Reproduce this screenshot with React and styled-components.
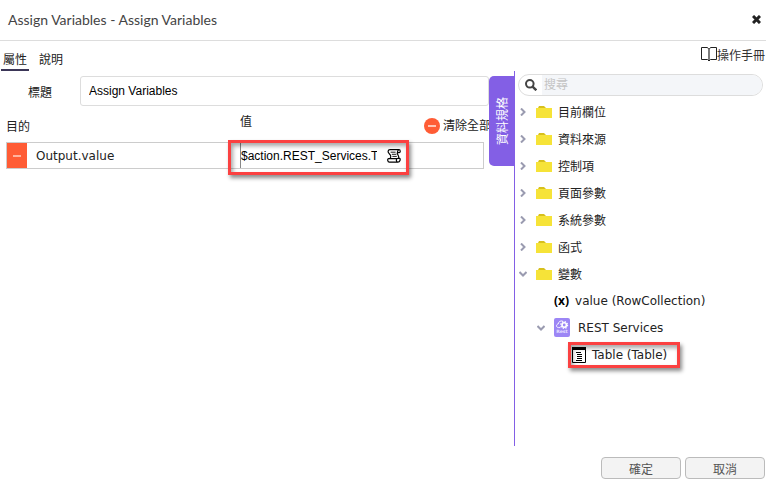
import React from 'react';
import styled, { createGlobalStyle } from 'styled-components';

const folders = ['目前欄位', '資料來源', '控制項', '頁面參數', '系統參數', '函式'];

const ChevronIcon = ({ open }) => (
  <svg width="8" height="8" viewBox="0 0 8 8" fill="none" stroke="#9a9bb0" strokeWidth="2">
    <path d={open ? 'M0.5 2 L4 5.5 L7.5 2' : 'M2 0.5 L5.5 4 L2 7.5'} />
  </svg>
);

const FolderIcon = () => (
  <svg width="16" height="12" viewBox="0 0 16 12">
    <path d="M0 2 H16 V12 H0 Z" fill="#f6e338" />
    <path d="M2 2 L3 0 H8 L10 2 Z" fill="#d7c01c" />
  </svg>
);

const BookIcon = () => (
  <svg width="16" height="15" viewBox="0 0 16 15" fill="none" stroke="#222">
    <path d="M8 2.5 L6.5 0.5 H0.5 V12.5 H6.5 L8 14 L9.5 12.5 H15.5 V0.5 H9.5 Z" />
    <path d="M8 2.5 V13.5" strokeWidth="1.2" />
  </svg>
);

const ScrollIcon = () => (
  <svg width="14" height="14" viewBox="0 0 14 14" fill="none" stroke="#000" strokeWidth="1.2">
    <path d="M3 0.7 H12 C13.6 0.7 13.6 3.6 12.2 3.6 H11 C10.3 3.6 10.3 1.7 11.6 1.2 M3 0.7 C0.6 0.7 0.8 3.4 2 4.4 L3.4 6.2 C4.3 7.6 3.4 8.8 3 9.6 M10.3 3.6 C9.8 5.2 12.2 6.6 11.8 9.4 M1.6 9.7 H10 C9 10.4 9.2 13.2 10.8 13.2 H2.4 C0.4 13.2 0.2 9.7 1.6 9.7 M10.8 13.2 C13.2 13.2 13.6 9.9 12.6 9.4 H10.5" />
    <path d="M3.6 3.2 H8.6 M4.8 5.3 H9.4 M5.4 7.4 H9.8" strokeWidth="0.9" />
  </svg>
);

const SearchIcon = () => (
  <svg width="12" height="12" viewBox="0 0 12 12" fill="none" stroke="#444" strokeWidth="2">
    <circle cx="4.8" cy="4.8" r="3.8" />
    <path d="M7.6 7.6 L11.3 11.3" strokeWidth="2.4" />
  </svg>
);

const CloseIcon = () => (
  <svg width="9" height="9" viewBox="0 0 9 9" stroke="#222" strokeWidth="3">
    <path d="M1 1 L8 8 M8 1 L1 8" />
  </svg>
);

const MinusCircleIcon = () => (
  <svg width="16" height="16" viewBox="0 0 16 16">
    <circle cx="8" cy="8" r="8" fill="#ff5c35" />
    <path d="M4 8 H12" stroke="#ffc5b5" strokeWidth="2" />
  </svg>
);

const MinusIcon = () => (
  <svg width="8" height="2" viewBox="0 0 8 2">
    <path d="M0 1 H8" stroke="#ffb39f" strokeWidth="2" />
  </svg>
);

const RestIcon = () => (
  <svg width="16" height="19" viewBox="0 0 16 19">
    <rect width="16" height="19" rx="2" fill="#9c86f5" />
    <path d="M6.4 9.6 H4.6 C2 9.6 1.8 6.4 4.2 6 C4.4 3.4 7 2.4 8.8 3.2" fill="none" stroke="#fff" strokeWidth="0.9" />
    <circle cx="10.2" cy="7" r="2.2" fill="none" stroke="#fff" strokeWidth="1.6" />
    <circle cx="10.2" cy="7" r="3.4" fill="none" stroke="#fff" strokeWidth="1.2" strokeDasharray="1.4 1.27" />
    <text x="8" y="15.4" textAnchor="middle" fontSize="4.6" fontWeight="bold" fill="#e6e0ff">Rest</text>
  </svg>
);

const TableIcon = () => (
  <svg width="14" height="16" viewBox="0 0 14 16">
    <path d="M0.5 0.5 H13.5 V15.5 H0.5 Z" fill="#fff" stroke="#000" />
    <path d="M0 0 H14 V3 H0 Z" fill="#000" />
    <path d="M4 5.5 H9 M5 7.5 H10 M5 9.5 H10 M5 11.5 H10 M4 13.5 H10" stroke="#000" />
  </svg>
);

const App = () => (
  <Dialog>
    <GlobalStyle />
    <Header>
      <Heading>Assign Variables - Assign Variables</Heading>
      <IconButton type="button" aria-label="Close">
        <CloseIcon />
      </IconButton>
    </Header>
    <TopBar>
      <Tabs role="tablist">
        <Tab type="button" role="tab" aria-selected="true" $active>
          屬性
        </Tab>
        <Tab type="button" role="tab" aria-selected="false">
          說明
        </Tab>
      </Tabs>
      <ManualLink href="#manual">
        <BookIcon />
        操作手冊
      </ManualLink>
    </TopBar>
    <Main>
      <Properties>
        <Field>
          <FieldLabel htmlFor="title">標題</FieldLabel>
          <TitleInput id="title" defaultValue="Assign Variables" />
        </Field>
        <Variables>
          <thead>
            <tr>
              <TargetHead>目的</TargetHead>
              <ValueHead>值</ValueHead>
              <ClearHead>
                <ClearButton type="button">
                  <MinusCircleIcon />
                  清除全部
                </ClearButton>
              </ClearHead>
            </tr>
          </thead>
          <tbody>
            <tr>
              <Cell>
                <Target>
                  <RemoveButton type="button" aria-label="Remove">
                    <MinusIcon />
                  </RemoveButton>
                  Output.value
                </Target>
              </Cell>
              <Cell>
                <Value>
                  <ValueInput aria-label="值" defaultValue="$action.REST_Services.Table" />
                  <IconButton type="button" aria-label="Edit expression">
                    <ScrollIcon />
                  </IconButton>
                  <ValueMark />
                </Value>
              </Cell>
              <Cell />
            </tr>
          </tbody>
        </Variables>
      </Properties>
      <SideTab type="button">資料規格</SideTab>
      <Explorer>
        <Search>
          <SearchButton type="button" aria-label="Search">
            <SearchIcon />
          </SearchButton>
          <SearchInput type="search" placeholder="搜尋" aria-label="搜尋" />
        </Search>
        <Tree>
          {folders.map((name) => (
            <Node key={name}>
              <Toggle type="button" aria-label={`Expand ${name}`}>
                <ChevronIcon />
              </Toggle>
              <FolderIcon />
              <NodeText>{name}</NodeText>
            </Node>
          ))}
          <Node>
            <Toggle type="button" aria-label="Collapse 變數">
              <ChevronIcon open />
            </Toggle>
            <FolderIcon />
            <NodeText>變數</NodeText>
          </Node>
          <Node $level={1}>
            <Toggle as="span" />
            <VariableSign>(x)</VariableSign>
            <NodeText>value (RowCollection)</NodeText>
          </Node>
          <Node $level={1}>
            <Toggle type="button" aria-label="Collapse REST Services">
              <ChevronIcon open />
            </Toggle>
            <RestIcon />
            <NodeText $wide>REST Services</NodeText>
          </Node>
          <Node $level={2}>
            <Toggle as="span" />
            <Marked>
              <TableIcon />
              <NodeText>Table (Table)</NodeText>
              <TableMark />
            </Marked>
          </Node>
        </Tree>
      </Explorer>
    </Main>
    <Footer>
      <FooterButton type="button">確定</FooterButton>
      <FooterButton type="button">取消</FooterButton>
    </Footer>
  </Dialog>
);

const GlobalStyle = createGlobalStyle`
  * {
    box-sizing: border-box;
  }

  body {
    margin: 0;
    background: #fff;
    color: #222;
    font-family: 'DejaVu Sans', 'Noto Sans CJK TC', sans-serif;
    font-size: 12px;
  }

  button,
  input {
    margin: 0;
    padding: 0;
    border: 0;
    background: none;
    color: inherit;
    font: inherit;
  }

  svg {
    flex: none;
    display: block;
  }
`;

const Dialog = styled.div`
  display: flex;
  flex-direction: column;
  min-height: 100vh;
`;

const Header = styled.header`
  display: flex;
  align-items: center;
  justify-content: space-between;
  height: 41px;
  padding: 0 5px 2px 8px;
  border-bottom: 1px solid #ddd;
`;

const Heading = styled.h1`
  margin: 0;
  color: #444;
  font-family: Lato, 'Noto Sans', sans-serif;
  font-size: 14px;
  font-weight: normal;
`;

const IconButton = styled.button`
  flex: none;
`;

const TopBar = styled.div`
  display: flex;
  align-items: flex-start;
  justify-content: space-between;
  height: 30px;
  padding: 0 1px;
`;

const Tabs = styled.div`
  display: flex;
  gap: 8px;
  height: 30px;
`;

const Tab = styled.button`
  width: 28px;
  padding-top: 6px;
  border-bottom: 2px solid ${({ $active }) => ($active ? '#3b3657' : 'transparent')};
  white-space: nowrap;
`;

const ManualLink = styled.a`
  display: flex;
  align-items: center;
  height: 27px;
  color: #333;
  text-decoration: none;
`;

const Main = styled.main`
  display: flex;
  flex: 1;
  align-items: flex-start;
`;

const Properties = styled.section`
  flex: 1;
  min-width: 0;
  padding-top: 5px;
`;

const Field = styled.div`
  display: flex;
  align-items: center;
`;

const FieldLabel = styled.label`
  width: 80px;
  text-align: center;
`;

const TitleInput = styled.input`
  flex: 1;
  min-width: 0;
  height: 30px;
  padding: 0 8px;
  border: 1px solid #ddd;
  border-radius: 3px;
  color: #000;
  font-family: 'Liberation Sans', sans-serif;
`;

const Variables = styled.table`
  width: calc(100% - 5px);
  margin-left: 6px;
  padding-right: 6px;
  border-spacing: 0;
  table-layout: fixed;
`;

const HeadCell = styled.th`
  height: 36px;
  padding: 0;
  font-weight: normal;
  line-height: 18px;
  text-align: left;
`;

const TargetHead = styled(HeadCell)`
  width: 234px;
  padding-top: 6px;
`;

const ValueHead = styled(HeadCell)`
  width: 168px;
  padding-bottom: 5px;
`;

const ClearHead = styled(HeadCell)`
  padding: 4px 0 0 16px;
`;

const ClearButton = styled.button`
  display: flex;
  align-items: center;
  gap: 3px;
  white-space: nowrap;
`;

const Cell = styled.td`
  height: 27px;
  padding: 0;
  border: solid #ccc;
  border-width: 1px 0;

  &:first-child {
    border-left-width: 1px;
  }

  &:last-child {
    border-right-width: 1px;
  }
`;

const Target = styled.div`
  display: flex;
  align-items: center;
  gap: 9px;
  height: 25px;
`;

const RemoveButton = styled.button`
  display: flex;
  align-items: center;
  justify-content: center;
  width: 20px;
  height: 25px;
  background: #ff5c35;
`;

const Value = styled.div`
  position: relative;
  display: flex;
  align-items: center;
  gap: 10px;
  height: 25px;
  border-left: 1px solid #888;
`;

const ValueInput = styled.input`
  width: 136px;
  height: 25px;
  color: #000;
  font-family: 'Liberation Sans', sans-serif;
`;

const Mark = styled.span`
  position: absolute;
  border: 3px solid #fb4141;
  box-shadow: 2px 3px 4px rgba(0, 0, 0, 0.45), inset 2px 3px 4px rgba(0, 0, 0, 0.35);
  pointer-events: none;
`;

const ValueMark = styled(Mark)`
  inset: -3px -1px -7px -13px;
`;

const TableMark = styled(Mark)`
  inset: -5px -13px -5px -4px;
`;

const SideTab = styled.button`
  z-index: 1;
  flex: none;
  width: 25px;
  height: 90px;
  margin-top: 5px;
  border-radius: 5px 0 0 5px;
  background: #835fe5;
  color: #fff;
  writing-mode: sideways-lr;
`;

const Explorer = styled.aside`
  flex: none;
  align-self: stretch;
  width: 252px;
  padding: 3px 3px 0;
  border-left: 1px solid #835fe5;
`;

const Search = styled.div`
  display: flex;
  height: 22px;
  overflow: hidden;
  border: 1px solid #ddd;
  border-radius: 11px;
`;

const SearchButton = styled.button`
  display: flex;
  align-items: center;
  width: 23px;
  padding-left: 6px;
`;

const SearchInput = styled.input`
  flex: 1;
  min-width: 0;
  padding-left: 2px;
  background: #f4f6f9;

  &::placeholder {
    color: #c4c4c4;
  }
`;

const Tree = styled.ul`
  margin: 2px 0 0;
  padding: 0;
  list-style: none;
`;

const Node = styled.li`
  display: flex;
  align-items: center;
  height: 27px;
  padding-left: ${({ $level = 0 }) => $level * 18}px;
`;

const Toggle = styled.button`
  flex: none;
  width: 18px;
  padding-left: 1px;
`;

const NodeText = styled.span`
  margin-left: ${({ $wide }) => ($wide ? 8 : 6)}px;
  white-space: nowrap;
`;

const VariableSign = styled.b`
  color: #000;
  font-family: 'Noto Sans', sans-serif;
`;

const Marked = styled.span`
  position: relative;
  display: flex;
  align-items: center;
`;

const Footer = styled.footer`
  display: flex;
  justify-content: flex-end;
  gap: 4px;
  padding: 11px 1px 4px;
`;

const FooterButton = styled.button`
  width: 80px;
  height: 22px;
  border: 1px solid #bbb;
  border-radius: 4px;
  background: #f3f3f3;
  color: #555;
`;

export default App;
